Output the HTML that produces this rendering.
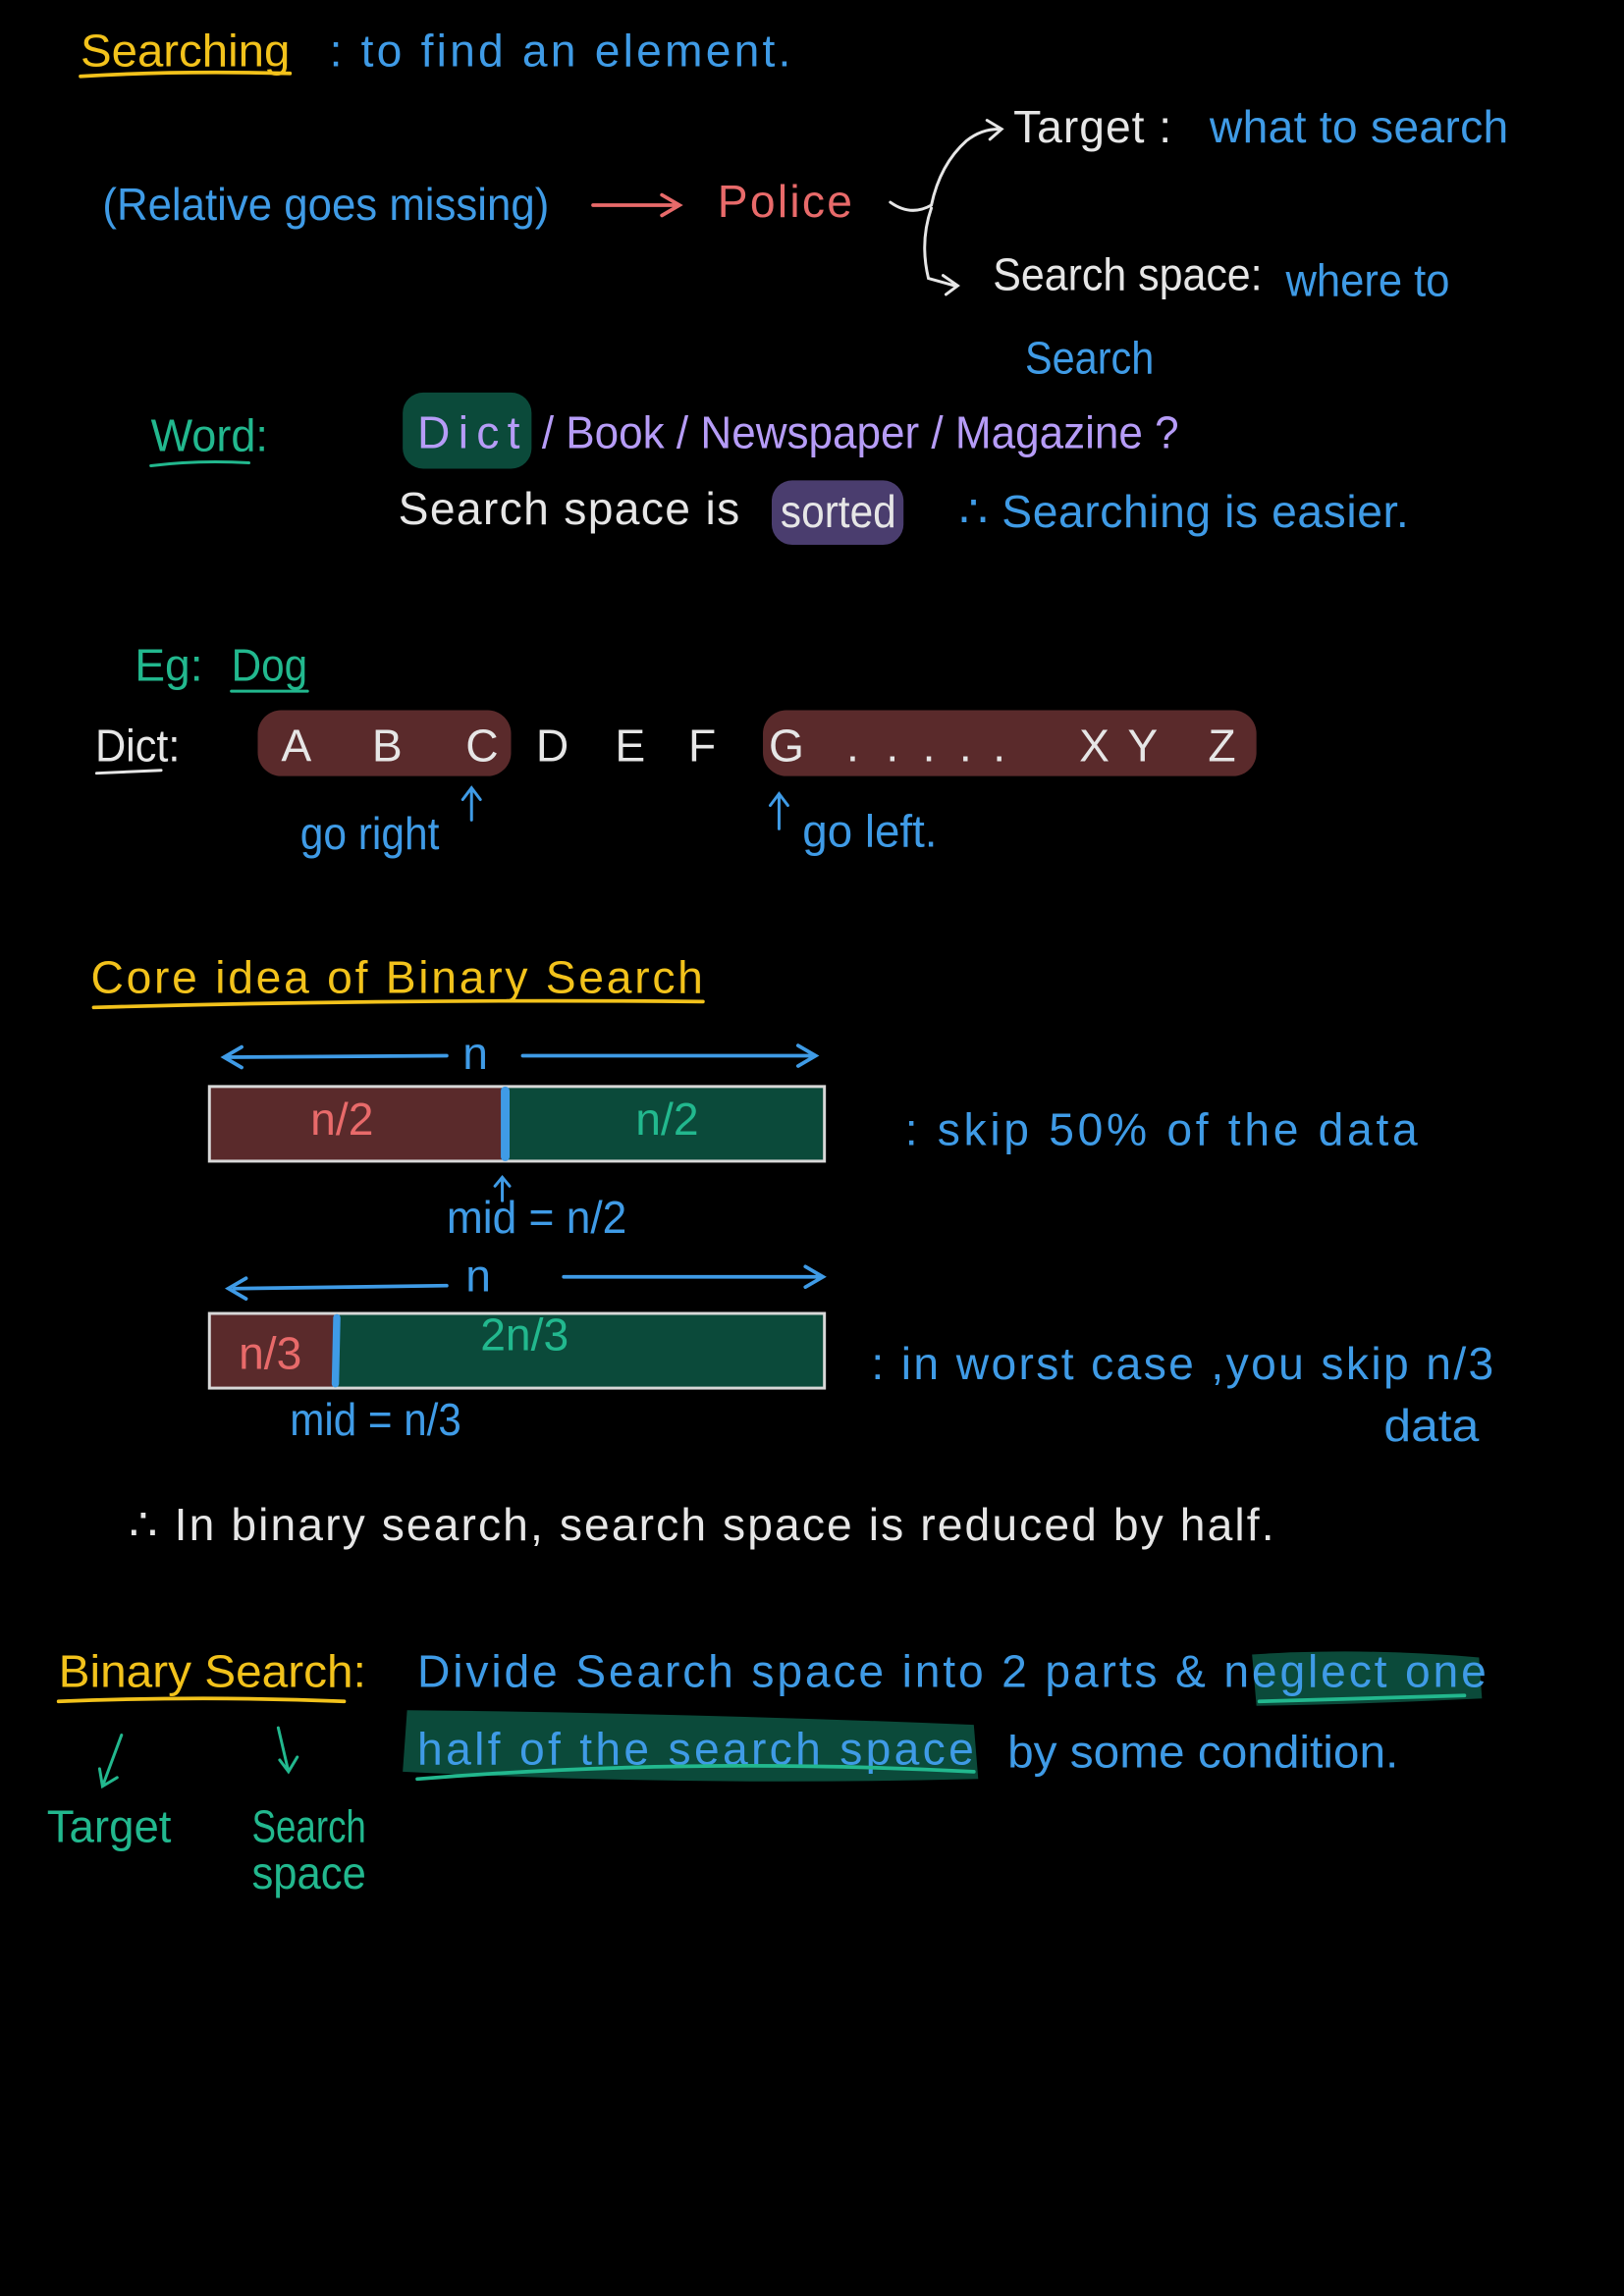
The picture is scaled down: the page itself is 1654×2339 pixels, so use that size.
<!DOCTYPE html>
<html><head><meta charset="utf-8"><style>
html,body{margin:0;padding:0;background:#000;}
svg{display:block}
text{font-family:"Liberation Sans",sans-serif;font-size:31px;}
.y{fill:#f2c21b}.b{fill:#3f9be6}.r{fill:#e86a6a}.g{fill:#22b88e}.p{fill:#b69cf7}.w{fill:#e6e6e6}
</style></head><body>
<svg width="1654" height="2339" viewBox="0 0 1109 1568" xmlns="http://www.w3.org/2000/svg">
<rect width="1109" height="1568" fill="#000"/>
<g fill="none" stroke-linecap="round">
<text x="55" y="45" class="y" textLength="143" lengthAdjust="spacingAndGlyphs">Searching</text>
<path d="M55 52 Q120 48 198 50" stroke="#f2c21b" stroke-width="2.5"/>
<text x="225" y="45" class="b" textLength="315" lengthAdjust="spacing">: to find an element.</text>

<text x="70" y="150" class="b" textLength="305" lengthAdjust="spacingAndGlyphs">(Relative goes missing)</text>
<path d="M405 140 L462 140 M452 133 L464 140 L452 147" stroke="#e86a6a" stroke-width="2.5"/>
<text x="490" y="148" class="r" textLength="92" lengthAdjust="spacing">Police</text>
<path d="M608 138 Q622 148 636 140 Q642 112 660 96 Q670 88 682 88 M674 82 L684 88 L676 95 M636 142 Q628 165 634 190 L652 195 M644 188 L654 195 L646 201" stroke="#e6e6e6" stroke-width="2"/>
<text x="692" y="97" class="w" textLength="108" lengthAdjust="spacing">Target :</text>
<text x="826" y="97" class="b" textLength="204" lengthAdjust="spacing">what to search</text>
<text x="678" y="198" class="w" textLength="184" lengthAdjust="spacingAndGlyphs">Search space:</text>
<text x="878" y="202" class="b" textLength="112" lengthAdjust="spacingAndGlyphs">where to</text>
<text x="700" y="255" class="b" textLength="88" lengthAdjust="spacingAndGlyphs">Search</text>

<text x="103" y="308" class="g" textLength="80" lengthAdjust="spacingAndGlyphs">Word:</text>
<path d="M103 318 Q135 314 170 316" stroke="#22b88e" stroke-width="2"/>
<rect x="275" y="268" width="88" height="52" rx="14" fill="#0b4a3a"/>
<text x="285" y="306" class="p" textLength="70" lengthAdjust="spacing">Dict</text>
<text x="370" y="306" class="p" textLength="435" lengthAdjust="spacingAndGlyphs">/ Book / Newspaper / Magazine ?</text>
<text x="272" y="358" class="w" textLength="233" lengthAdjust="spacing">Search space is</text>
<rect x="527" y="328" width="90" height="44" rx="14" fill="#4a3d6e"/>
<text x="533" y="360" class="w" textLength="79" lengthAdjust="spacingAndGlyphs">sorted</text>
<text x="655" y="360" class="b" textLength="307" lengthAdjust="spacing">∴ Searching is easier.</text>

<text x="92" y="465" class="g">Eg:</text>
<text x="158" y="465" class="g" textLength="52" lengthAdjust="spacingAndGlyphs">Dog</text>
<path d="M158 472 L210 472" stroke="#22b88e" stroke-width="2"/>
<text x="65" y="520" class="w" textLength="58" lengthAdjust="spacingAndGlyphs">Dict:</text>
<path d="M66 528 L110 526" stroke="#e6e6e6" stroke-width="2"/>
<rect x="176" y="485" width="173" height="45" rx="16" fill="#5a2a2b"/>
<rect x="521" y="485" width="337" height="45" rx="16" fill="#5a2a2b"/>
<text y="520" class="w"><tspan x="192">A</tspan><tspan x="254">B</tspan><tspan x="318">C</tspan><tspan x="366">D</tspan><tspan x="420">E</tspan><tspan x="470">F</tspan><tspan x="525">G</tspan><tspan x="578">.</tspan><tspan x="605">.</tspan><tspan x="630">.</tspan><tspan x="655">.</tspan><tspan x="678">.</tspan><tspan x="737">X</tspan><tspan x="770">Y</tspan><tspan x="825">Z</tspan></text>
<text x="205" y="580" class="b" textLength="95" lengthAdjust="spacingAndGlyphs">go right</text>
<path d="M322 560 L322 538 M316 546 L322 538 L328 546 M532 566 L532 542 M526 550 L532 542 L538 550" stroke="#3f9be6" stroke-width="2"/>
<text x="548" y="578" class="b" textLength="92" lengthAdjust="spacingAndGlyphs">go left.</text>

<text x="62" y="678" class="y" textLength="418" lengthAdjust="spacing">Core idea of Binary Search</text>
<path d="M64 688 Q270 682 480 684" stroke="#f2c21b" stroke-width="2.5"/>
<path d="M155 722 L305 721 M165 715 L153 722 L165 729 M357 721 L555 721 M545 714 L557 721 L545 728" stroke="#3f9be6" stroke-width="2.5"/>
<text x="316" y="730" class="b">n</text>
<rect x="143" y="742" width="202" height="51" fill="#5a2a2b"/>
<rect x="345" y="742" width="218" height="51" fill="#0b4a3a"/>
<rect x="143" y="742" width="420" height="51" stroke="#d8d8d8" stroke-width="2"/>
<path d="M345 745 L345 790" stroke="#3f9be6" stroke-width="6"/>
<text x="212" y="775" class="r">n/2</text>
<text x="434" y="775" class="g">n/2</text>
<text x="618" y="782" class="b" textLength="350" lengthAdjust="spacing">: skip 50% of the data</text>
<path d="M343 820 L343 804 M338 810 L343 804 L348 810" stroke="#3f9be6" stroke-width="2"/>
<text x="305" y="842" class="b" textLength="123" lengthAdjust="spacingAndGlyphs">mid = n/2</text>
<path d="M160 880 L305 878 M168 873 L156 880 L168 887 M385 872 L560 872 M550 865 L562 872 L550 879" stroke="#3f9be6" stroke-width="2.5"/>
<text x="318" y="882" class="b">n</text>
<rect x="143" y="897" width="87" height="51" fill="#5a2a2b"/>
<rect x="230" y="897" width="333" height="51" fill="#0b4a3a"/>
<rect x="143" y="897" width="420" height="51" stroke="#d8d8d8" stroke-width="2"/>
<path d="M230 900 L229 945" stroke="#3f9be6" stroke-width="5"/>
<text x="163" y="935" class="r">n/3</text>
<text x="328" y="922" class="g">2n/3</text>
<text x="595" y="942" class="b" textLength="425" lengthAdjust="spacing">: in worst case ,you skip n/3</text>
<text x="945" y="984" class="b" textLength="65" lengthAdjust="spacingAndGlyphs">data</text>
<text x="198" y="980" class="b" textLength="117" lengthAdjust="spacingAndGlyphs">mid = n/3</text>

<text x="88" y="1052" class="w" textLength="782" lengthAdjust="spacing">∴ In binary search, search space is reduced by half.</text>

<text x="40" y="1152" class="y" textLength="210" lengthAdjust="spacingAndGlyphs">Binary Search:</text>
<path d="M40 1162 Q140 1158 235 1162" stroke="#f2c21b" stroke-width="2.5"/>
<path d="M855 1130 Q930 1125 1010 1132 L1012 1160 Q930 1164 858 1165 Z" fill="#0b4a3a"/>
<path d="M278 1168 Q470 1170 665 1178 L668 1215 Q470 1220 275 1210 Z" fill="#0b4a3a"/>
<text x="285" y="1152" class="b" textLength="730" lengthAdjust="spacing">Divide Search space into 2 parts &amp; neglect one</text>
<path d="M860 1162 Q930 1160 1000 1158" stroke="#22b88e" stroke-width="2.5"/>
<text x="285" y="1205" class="b" textLength="380" lengthAdjust="spacing">half of the search space</text>
<path d="M285 1215 Q470 1200 665 1210" stroke="#22b88e" stroke-width="2.5"/>
<text x="688" y="1207" class="b" textLength="267" lengthAdjust="spacingAndGlyphs">by some condition.</text>
<path d="M83 1185 L70 1220 M68 1208 L70 1220 L80 1214 M190 1180 L197 1210 M191 1202 L197 1210 L203 1200" stroke="#22b88e" stroke-width="2"/>
<text x="32" y="1258" class="g" textLength="85" lengthAdjust="spacingAndGlyphs">Target</text>
<text x="172" y="1258" class="g" textLength="78" lengthAdjust="spacingAndGlyphs">Search</text>
<text x="172" y="1290" class="g" textLength="78" lengthAdjust="spacingAndGlyphs">space</text>
</g>
</svg>
</body></html>
